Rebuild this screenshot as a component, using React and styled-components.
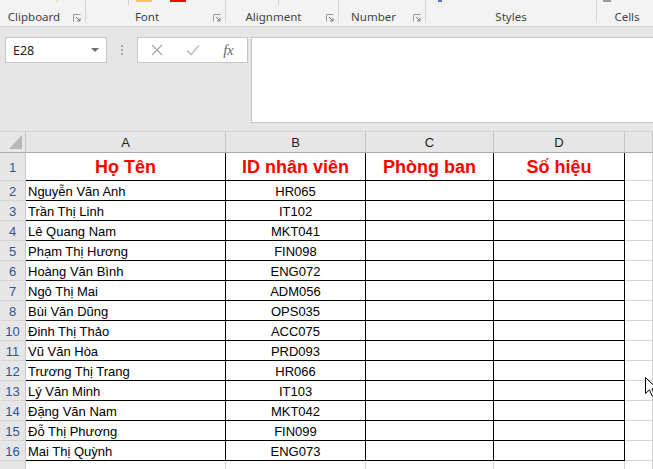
import styled, { createGlobalStyle } from "styled-components";

const rows = [
  [2, "Nguyễn Văn Anh", "HR065"],
  [3, "Trần Thị Linh", "IT102"],
  [4, "Lê Quang Nam", "MKT041"],
  [5, "Phạm Thị Hương", "FIN098"],
  [6, "Hoàng Văn Bình", "ENG072"],
  [7, "Ngô Thị Mai", "ADM056"],
  [8, "Bùi Văn Dũng", "OPS035"],
  [10, "Đinh Thị Thảo", "ACC075"],
  [11, "Vũ Văn Hòa", "PRD093"],
  [12, "Trương Thị Trang", "HR066"],
  [13, "Lý Văn Minh", "IT103"],
  [14, "Đặng Văn Nam", "MKT042"],
  [15, "Đỗ Thị Phương", "FIN099"],
  [16, "Mai Thị Quỳnh", "ENG073"],
];

const groups = [
  { label: "Clipboard", width: 86, launcher: true, peeks: [{ left: 56, w: 2, color: "#f4e9a8" }] },
  {
    label: "Font",
    width: 140,
    launcher: true,
    peeks: [
      { left: 42, w: 1, h: 5, color: "#d0d0d0" },
      { left: 50, w: 16, color: "#f8c35b" },
      { left: 84, w: 16, color: "#ff0000" },
    ],
  },
  { label: "Alignment", width: 113, launcher: true, peeks: [{ left: 52, w: 1, h: 5, color: "#d0d0d0" }] },
  { label: "Number", width: 87, launcher: true, peeks: [] },
  { label: "Styles", width: 171, launcher: false, peeks: [{ left: 12, w: 4, color: "#4a7ebb" }] },
  { label: "Cells", width: 60, launcher: false, peeks: [{ left: 6, w: 8, color: "#9a9a9a" }], last: true },
];

export default function App() {
  return (
    <>
      <GlobalStyle />
      <Window>
        <Ribbon>
          {groups.map((g) => (
            <Group key={g.label} $width={g.width} $last={g.last}>
              <PeekRow>
                {g.peeks.map((p, i) => (
                  <Peek key={i} $left={p.left} $w={p.w} $h={p.h} $color={p.color} />
                ))}
              </PeekRow>
              <GroupFooter>
                <GroupLabel>{g.label}</GroupLabel>
                {g.launcher && (
                  <Launcher>
                    <svg width="8" height="8" viewBox="0 0 8 8">
                      <path d="M0.5 7.5V0.5H7.5" fill="none" stroke="#9a9a9a" />
                      <path d="M3 3L7 7M7 4V7H4" fill="none" stroke="#7a7a7a" />
                    </svg>
                  </Launcher>
                )}
              </GroupFooter>
            </Group>
          ))}
        </Ribbon>

        <FormulaArea>
          <NameBox>
            <span>E28</span>
            <Caret />
          </NameBox>
          <Grip>
            <i />
            <i />
            <i />
          </Grip>
          <FormulaButtons>
            <FxButton>
              <svg width="12" height="12" viewBox="0 0 12 12">
                <path d="M1 1L11 11M11 1L1 11" stroke="#a8a8a8" strokeWidth="1.3" />
              </svg>
            </FxButton>
            <FxButton>
              <svg width="14" height="12" viewBox="0 0 14 12">
                <path d="M1 6.5L5 10.5L13 1.5" fill="none" stroke="#c4c4c4" strokeWidth="1.8" />
              </svg>
            </FxButton>
            <FxButton>
              <FxText>fx</FxText>
            </FxButton>
          </FormulaButtons>
          <FormulaInput />
        </FormulaArea>

        <Sheet>
          <Corner>
            <Triangle />
          </Corner>
          {["A", "B", "C", "D", ""].map((c) => (
            <ColHead key={c || "E"}>{c}</ColHead>
          ))}

          <RowHead>1</RowHead>
          <TitleCell>Họ Tên</TitleCell>
          <TitleCell>ID nhân viên</TitleCell>
          <TitleCell>Phòng ban</TitleCell>
          <TitleCell>Số hiệu</TitleCell>
          <Cell />

          {rows.map(([n, name, id]) => (
            <Row key={n} n={n} name={name} id={id} />
          ))}

          <RowHead $cut>20</RowHead>
          <Cell $cut />
          <Cell $cut />
          <Cell $cut />
          <Cell $cut />
          <Cell $cut />
        </Sheet>

        <Pointer width="13" height="20" viewBox="0 0 13 20">
          <path d="M0.5 0.5V16.5L4.5 12.8L7.2 19L9.6 18L7 11.8H12.3Z" fill="#fff" stroke="#000" />
        </Pointer>
      </Window>
    </>
  );
}

function Row({ n, name, id }) {
  return (
    <>
      <RowHead>{n}</RowHead>
      <Cell $table>{name}</Cell>
      <Cell $table $center>
        {id}
      </Cell>
      <Cell $table />
      <Cell $table />
      <Cell />
    </>
  );
}

const GlobalStyle = createGlobalStyle`
  * { box-sizing: border-box; }
  body {
    margin: 0;
    background: #e6e6e6;
    font-family: "Liberation Sans", Arial, sans-serif;
  }
`;

const Window = styled.div`
  position: relative;
  width: 653px;
  height: 469px;
  overflow: hidden;
  background: #e6e6e6;
`;

const Ribbon = styled.div`
  display: flex;
  height: 27px;
  padding-bottom: 3px;
  background: #f3f3f3;
  border-bottom: 1px solid #d5d5d5;
`;

const Group = styled.div`
  display: flex;
  flex-direction: column;
  flex: 0 0 ${({ $width }) => $width}px;
  border-right: ${({ $last }) => ($last ? "none" : "1px solid #d8d8d8")};
`;

const PeekRow = styled.div`
  position: relative;
  height: 10px;
`;

const Peek = styled.span`
  position: absolute;
  top: 0;
  left: ${({ $left }) => $left}px;
  width: ${({ $w }) => $w}px;
  height: ${({ $h }) => $h || 2}px;
  background: ${({ $color }) => $color};
`;

const GroupFooter = styled.div`
  flex: 1;
  display: flex;
  align-items: center;
  line-height: 13px;
`;

const GroupLabel = styled.span`
  flex: 1;
  text-align: center;
  font-family: "Noto Sans", "Open Sans", sans-serif;
  font-size: 11.5px;
  color: #444;
  white-space: nowrap;
`;

const Launcher = styled.span`
  flex: 0 0 17px;
  display: flex;
  align-items: center;
  justify-content: center;
  padding-top: 3px;
`;

const FormulaArea = styled.div`
  display: flex;
  align-items: flex-start;
  height: 104px;
  padding: 10px 0 0 5px;
`;

const NameBox = styled.div`
  flex: 0 0 102px;
  height: 26px;
  display: flex;
  align-items: center;
  justify-content: space-between;
  padding: 0 7px 0 7px;
  background: #fff;
  border: 1px solid #c6c6c6;
  font-family: "Noto Sans", "Open Sans", sans-serif;
  font-size: 12.5px;
  color: #222;
`;

const Caret = styled.span`
  width: 0;
  height: 0;
  border-left: 4px solid transparent;
  border-right: 4px solid transparent;
  border-top: 4px solid #707070;
`;

const Grip = styled.div`
  flex: 0 0 30px;
  height: 26px;
  display: flex;
  flex-direction: column;
  align-items: center;
  justify-content: center;
  gap: 2px;

  i {
    width: 2px;
    height: 2px;
    background: #a8a8a8;
  }
`;

const FormulaButtons = styled.div`
  flex: 0 0 111px;
  height: 26px;
  display: flex;
  padding: 0 1px;
  background: #fff;
  border: 1px solid #c6c6c6;
`;

const FxButton = styled.div`
  flex: 1;
  display: flex;
  align-items: center;
  justify-content: center;
`;

const FxText = styled.span`
  font-family: "Liberation Serif", "Times New Roman", serif;
  font-style: italic;
  font-size: 15px;
  color: #6a6a6a;
  letter-spacing: -0.5px;
`;

const FormulaInput = styled.div`
  flex: 1;
  height: 86px;
  margin: 0 -2px 0 3px;
  background: #fff;
  border: 1px solid #c6c6c6;
`;

const Sheet = styled.div`
  display: grid;
  grid-template-columns: 26px 200px 140px 128px 131px 1fr;
  grid-template-rows: 22px 28px repeat(14, 20px) 20px;
  font-family: "Liberation Sans", Arial, sans-serif;
`;

const Corner = styled.div`
  display: flex;
  align-items: flex-end;
  justify-content: flex-end;
  padding: 0 3px 3px 0;
  background: #e6e6e6;
  border-top: 1px solid #d4d4d4;
  border-right: 1px solid #c6c6c6;
  border-bottom: 1px solid #ababab;
`;

const Triangle = styled.span`
  width: 13px;
  height: 14px;
  background: #b8b8b8;
  clip-path: polygon(100% 0, 100% 100%, 0 100%);
`;

const ColHead = styled.div`
  display: flex;
  align-items: center;
  justify-content: center;
  padding-top: 1px;
  background: #e6e6e6;
  border-top: 1px solid #d4d4d4;
  border-right: 1px solid #c6c6c6;
  border-bottom: 1px solid #ababab;
  font-size: 13px;
  color: #222;
`;

const RowHead = styled.div`
  display: flex;
  align-items: ${({ $cut }) => ($cut ? "flex-start" : "center")};
  justify-content: center;
  padding-top: ${({ $cut }) => ($cut ? "6px" : "1px")};
  background: #e6e6e6;
  border-right: 1px solid #c6c6c6;
  border-bottom: 1px solid #d4d4d4;
  font-size: 13px;
  color: #2f52a0;
`;

const Cell = styled.div`
  display: flex;
  align-items: center;
  justify-content: ${({ $center }) => ($center ? "center" : "flex-start")};
  padding: 1px 2px 0;
  background: #fff;
  border-right: 1px solid ${({ $table }) => ($table ? "#000" : "#d4d4d4")};
  border-bottom: ${({ $table, $cut }) => ($cut ? "none" : `1px solid ${$table ? "#000" : "#d4d4d4"}`)};
  font-size: 13px;
  color: #000;
  white-space: nowrap;
  overflow: hidden;
`;

const TitleCell = styled(Cell).attrs({ $table: true, $center: true })`
  padding-top: 2px;
  font-size: 18px;
  font-weight: 700;
  color: #ff0000;
`;

const Pointer = styled.svg`
  position: absolute;
  left: 645px;
  top: 377px;
`;
